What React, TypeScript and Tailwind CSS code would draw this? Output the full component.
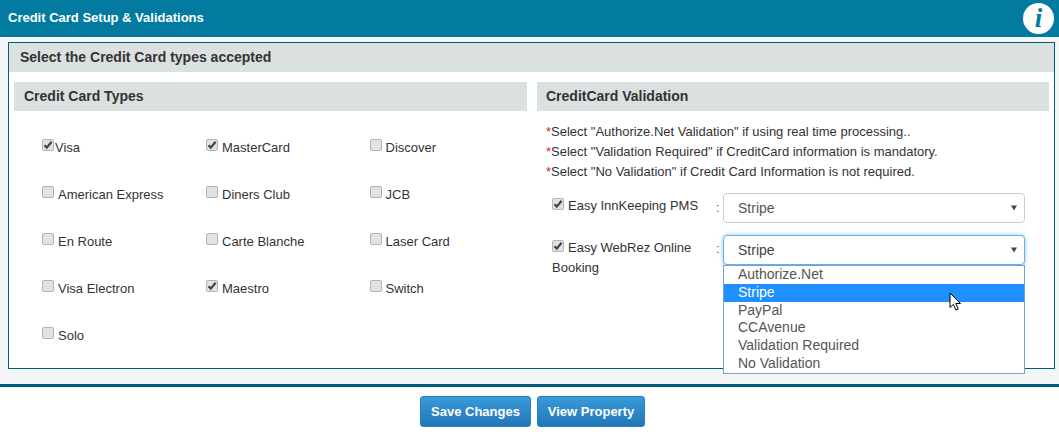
import React from 'react';

const cards = [
  { name: 'Visa', checked: true, tight: true },
  { name: 'MasterCard', checked: true },
  { name: 'Discover' },
  { name: 'American Express' },
  { name: 'Diners Club' },
  { name: 'JCB' },
  { name: 'En Route' },
  { name: 'Carte Blanche' },
  { name: 'Laser Card' },
  { name: 'Visa Electron' },
  { name: 'Maestro', checked: true },
  { name: 'Switch' },
  { name: 'Solo' },
];

const options = ['Authorize.Net', 'Stripe', 'PayPal', 'CCAvenue', 'Validation Required', 'No Validation'];

const notes = [
  'Select "Authorize.Net Validation" if using real time processing..',
  'Select "Validation Required" if CreditCard information is mandatory.',
  'Select "No Validation" if Credit Card Information is not required.',
];

function Check({ checked }: { checked?: boolean }) {
  return (
    <span className="mb-[5px] flex h-[12px] w-[12px] shrink-0 items-center justify-center rounded-[2px] border border-[#b4b4b4] bg-[#e2e2e2]">
      {checked && (
        <svg width="10" height="10" viewBox="0 0 10 10">
          <path d="M1.5 5.2 L3.8 7.6 L8.6 1.8" fill="none" stroke="#444" strokeWidth="2.2" />
        </svg>
      )}
    </span>
  );
}

function SelectBox({ focused }: { focused?: boolean }) {
  return (
    <div
      className={
        focused
          ? 'flex h-[30px] w-[302px] items-center justify-between rounded-[4px] border border-[#66afe9] bg-white pl-[14px] pr-[3px] text-[14px] text-[#444] shadow-[0_0_4px_rgba(102,175,233,0.7)]'
          : 'flex h-[30px] w-[302px] items-center justify-between rounded-[4px] border border-[#ccc] bg-white pl-[14px] pr-[3px] text-[14px] text-[#555]'
      }
    >
      <span>Stripe</span>
      <svg width="12" height="8" viewBox="0 0 12 8" className="mr-[1px]">
        <path d="M3 1.5 H9 L6 6.5 Z" fill="#444" />
      </svg>
    </div>
  );
}

export default function App() {
  return (
    <div className="h-[432px] w-[1059px] overflow-hidden bg-white font-['Liberation_Sans',Arial,sans-serif] text-[13px] text-[#333]">
      <div className="flex h-[37px] items-center justify-between bg-[#037ba0] pl-[8px] pr-[5px]">
        <span className="mb-[2px] text-[13px] font-bold text-white">Credit Card Setup &amp; Validations</span>
        <span className="flex h-[31px] w-[31px] items-center justify-center rounded-full bg-white font-['Liberation_Serif',serif] text-[27px] font-bold italic leading-none text-[#037ba0]">
          i
        </span>
      </div>

      <div className="h-[350px] border-b-[3px] border-[#005f78] bg-[#f3f6f6] px-[8px] pt-[5px]">
        <div className="relative h-[327px] w-[1047px] border border-[#005f78] bg-white">
          <div className="flex h-[29px] items-center bg-[#dbe0e0] pl-[11px] text-[14px] font-bold text-[#333]">
            Select the Credit Card types accepted
          </div>

          <div className="flex gap-[10px] px-[5px] pt-[10px]">
            <div className="w-[513px]">
              <div className="flex h-[29px] items-center bg-[#dbe0e0] pl-[10px] text-[14px] font-bold">
                Credit Card Types
              </div>
              <div className="grid grid-cols-[164px_163.5px_1fr] pl-[28px] pt-[13px]">
                {cards.map((c) => (
                  <div key={c.name} className="flex h-[47px] items-center">
                    <Check checked={c.checked} />
                    <span className={c.tight ? 'ml-[1px]' : 'ml-[4px]'}>{c.name}</span>
                  </div>
                ))}
              </div>
            </div>

            <div className="w-[512px]">
              <div className="flex h-[29px] items-center bg-[#dbe0e0] pl-[9px] text-[14px] font-bold">
                CreditCard Validation
              </div>
              <div className="pl-[9px] pt-[11px] leading-[20px] text-[#333]">
                {notes.map((n) => (
                  <div key={n}>
                    <span className="text-[#e02020]">*</span>
                    {n}
                  </div>
                ))}
              </div>
              <div className="flex pl-[15px] pt-[11px]">
                <div className="w-[164px] pt-[3px] leading-[20px]">
                  <div className="flex items-center gap-[4px]">
                    <Check checked />
                    <span>Easy InnKeeping PMS</span>
                  </div>
                </div>
                <span className="w-[7px] pt-[5px] text-[#7a4a5a]">:</span>
                <SelectBox />
              </div>
              <div className="flex pl-[15px] pt-[12px]">
                <div className="w-[164px] pt-[3px] leading-[20px]">
                  <div className="flex items-center gap-[4px]">
                    <Check checked />
                    <span>Easy WebRez Online</span>
                  </div>
                  <div>Booking</div>
                </div>
                <span className="w-[7px] pt-[4px] text-[#7a4a5a]">:</span>
                <SelectBox focused />
              </div>
            </div>
          </div>

          <div className="absolute left-[714px] top-[222px] w-[302px] border border-[#7a9fd6] bg-white text-[14px] leading-[17.8px] text-[#555]">
            {options.map((o) => (
              <div key={o} className={o === 'Stripe' ? 'bg-[#1e90ff] pl-[14px] text-white' : 'pl-[14px]'}>
                {o}
              </div>
            ))}
          </div>

          <svg width="14" height="20" viewBox="0 0 14 20" className="absolute left-[940px] top-[249px]">
            <path d="M1 1 V15.5 L4.4 12.4 L6.8 18 L9.2 17 L6.8 11.5 L11.5 11.5 Z" fill="#fff" stroke="#000" strokeWidth="1" />
          </svg>
        </div>
      </div>

      <div className="flex justify-center gap-[6px] pl-[6px] pt-[9px]">
        <button className="h-[31px] w-[111px] rounded-[3px] border border-[#2a80b9] bg-gradient-to-b from-[#3a9ad9] to-[#2077b8] text-[13px] font-bold text-white">
          Save Changes
        </button>
        <button className="h-[31px] w-[108px] rounded-[3px] border border-[#2a80b9] bg-gradient-to-b from-[#3a9ad9] to-[#2077b8] text-[13px] font-bold text-white">
          View Property
        </button>
      </div>
    </div>
  );
}
